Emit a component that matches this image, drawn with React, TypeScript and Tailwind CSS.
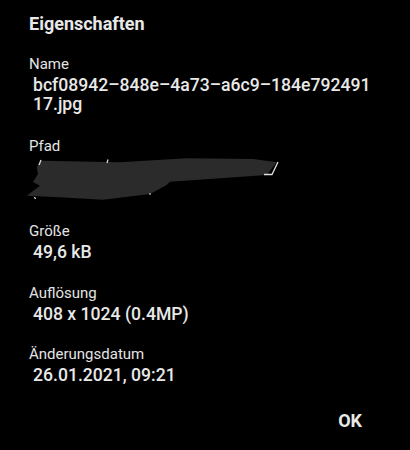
import React from "react";

const font = { fontFamily: "Roboto, 'Noto Sans', sans-serif" };

const Field = ({ label, children, top }: { label: string; children: React.ReactNode; top: string }) => (
  <div className={top}>
    <div className="text-[15px] leading-[18px] text-[#e4e4e4]">{label}</div>
    <div className="mt-[3px] pl-[4px] text-[17.6px] font-medium leading-[19px] text-[#e8e8e8]">{children}</div>
  </div>
);

// redacted path, drawn as a scribble
const Scribble = () => (
  <svg width="260" height="50" viewBox="20 155 260 50" className="block">
    <path
      d="M41.7 161.7 L120 163.3 L186.7 159.3 L253.3 160 L276.7 163.3 L266.7 176 L170 182.7 L166.7 186 L150 195 L103 200.7 L60 198.3 L26.7 196.7 L40 186.7 L33 183 L38 175 L36.7 168 Z"
      fill="#2b2b2b"
    />
    <path d="M39 166 L41 161" stroke="#e0e0e0" strokeWidth="1.3" />
    <path d="M264 175.5 L272 175.5 L278 163" stroke="#e0e0e0" strokeWidth="1.3" fill="none" />
    <path d="M107 164 L108 160.5" stroke="#e0e0e0" strokeWidth="1.2" />
    <path d="M34.5 198 L35.5 200" stroke="#e0e0e0" strokeWidth="1.2" />
    <path d="M149 195 L151 195" stroke="#e0e0e0" strokeWidth="1" />
  </svg>
);

export default function App() {
  return (
    <div className="w-[410px] h-[450px] bg-black overflow-hidden" style={font}>
      <div className="px-[29px] pt-[14px]">
        <div className="text-[18px] font-bold leading-[20px] text-[#e8e8e8]">Eigenschaften</div>

        <Field label="Name" top="mt-[21px]">
          bcf08942–848e–4a73–a6c9–184e792491
          <br />
          17.jpg
        </Field>

        <div className="mt-[23px]">
          <div className="text-[15px] leading-[18px] text-[#e4e4e4]">Pfad</div>
          <div className="-ml-[9px] mt-[-1px]">
            <Scribble />
          </div>
        </div>

        <Field label="Größe" top="mt-[18px]">
          49,6 kB
        </Field>

        <Field label="Auflösung" top="mt-[22px]">
          408 x 1024 (0.4MP)
        </Field>

        <Field label="Änderungsdatum" top="mt-[21px]">
          26.01.2021, 09:21
        </Field>

        <div className="mt-[26px] flex justify-end pr-[19px]">
          <span className="text-[18px] font-bold leading-[20px] text-[#e8e8e8]">OK</span>
        </div>
      </div>
    </div>
  );
}
